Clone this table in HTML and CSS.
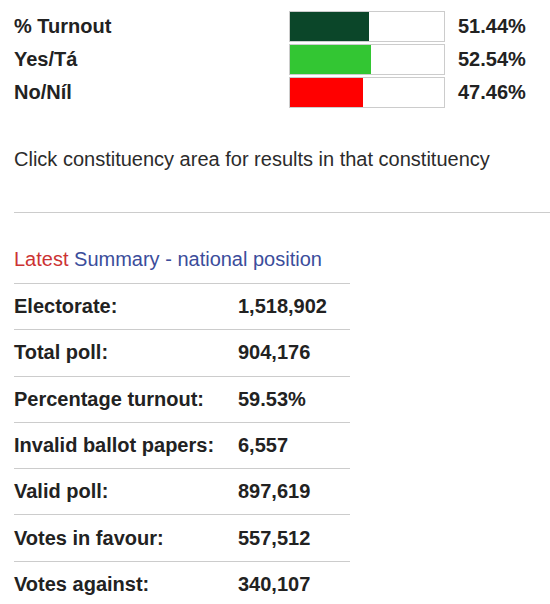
FILE: index.html
```html
<!DOCTYPE html>
<html>
<head>
    <meta charset="UTF-8">
    <title>Referendum Results</title>
    <link rel="stylesheet" href="styles.css">
</head>
<body>
<div class="results">
    <div class="bars">
        <div class="bar-label">% Turnout</div>
        <div class="bar-track"><div class="bar-fill turnout" style="width: 51.44%"></div></div>
        <div class="bar-value">51.44%</div>

        <div class="bar-label">Yes/Tá</div>
        <div class="bar-track"><div class="bar-fill yes" style="width: 52.54%"></div></div>
        <div class="bar-value">52.54%</div>

        <div class="bar-label">No/Níl</div>
        <div class="bar-track"><div class="bar-fill no" style="width: 47.46%"></div></div>
        <div class="bar-value">47.46%</div>
    </div>

    <p class="hint">Click constituency area for results in that constituency</p>

    <hr class="divider">

    <h3 class="summary-title"><span class="latest">Latest</span> Summary - national position</h3>

    <table class="summary">
        <tr><td class="key">Electorate:</td><td>1,518,902</td></tr>
        <tr><td class="key">Total poll:</td><td>904,176</td></tr>
        <tr><td class="key">Percentage turnout:</td><td>59.53%</td></tr>
        <tr><td class="key">Invalid ballot papers:</td><td>6,557</td></tr>
        <tr><td class="key">Valid poll:</td><td>897,619</td></tr>
        <tr><td class="key">Votes in favour:</td><td>557,512</td></tr>
        <tr><td class="key">Votes against:</td><td>340,107</td></tr>
    </table>
</div>
</body>
</html>
```

FILE: styles.css
```css
body {
    margin: 0;
    background: #fff;
    font-family: "Liberation Sans", Arial, sans-serif;
    font-size: 20px;
    color: #222;
}

.results {
    padding: 11px 0 0 14px;
}

/* bar chart at the top */
.bars {
    display: grid;
    grid-template-columns: 275px 156px auto;
    grid-auto-rows: 31px;
    row-gap: 2px;
}

.bar-label {
    font-weight: bold;
    line-height: 31px;
}

.bar-track {
    border: 1px solid #ccc;
    background: #fff;
    box-sizing: border-box;
}

.bar-fill {
    height: 100%;
}

.turnout { background: #0b4629; }
.yes { background: #33c633; }
.no { background: #ff0000; }

.bar-value {
    font-weight: bold;
    line-height: 31px;
    padding-left: 13px;
}

.hint {
    margin: 40px 0 0 0;
    line-height: 23px;
    color: #2b2b2b;
}

.divider {
    margin: 41px 0 0 0;
    border: 0;
    border-top: 1px solid #ccc;
}

.summary-title {
    font-size: 20px;
    font-weight: normal;
    color: #3b4d9b;
    margin: 35px 0 0 0;
    line-height: 23px;
}

.latest {
    color: #cc3333;
}

table.summary {
    border-collapse: collapse;
    width: 336px;
    margin-top: 12px;
}

table.summary td {
    border-top: 1px solid #ccc;
    height: 45.3px;
    padding: 0;
    font-weight: bold;
}

table.summary td.key {
    width: 224px;
}
```
